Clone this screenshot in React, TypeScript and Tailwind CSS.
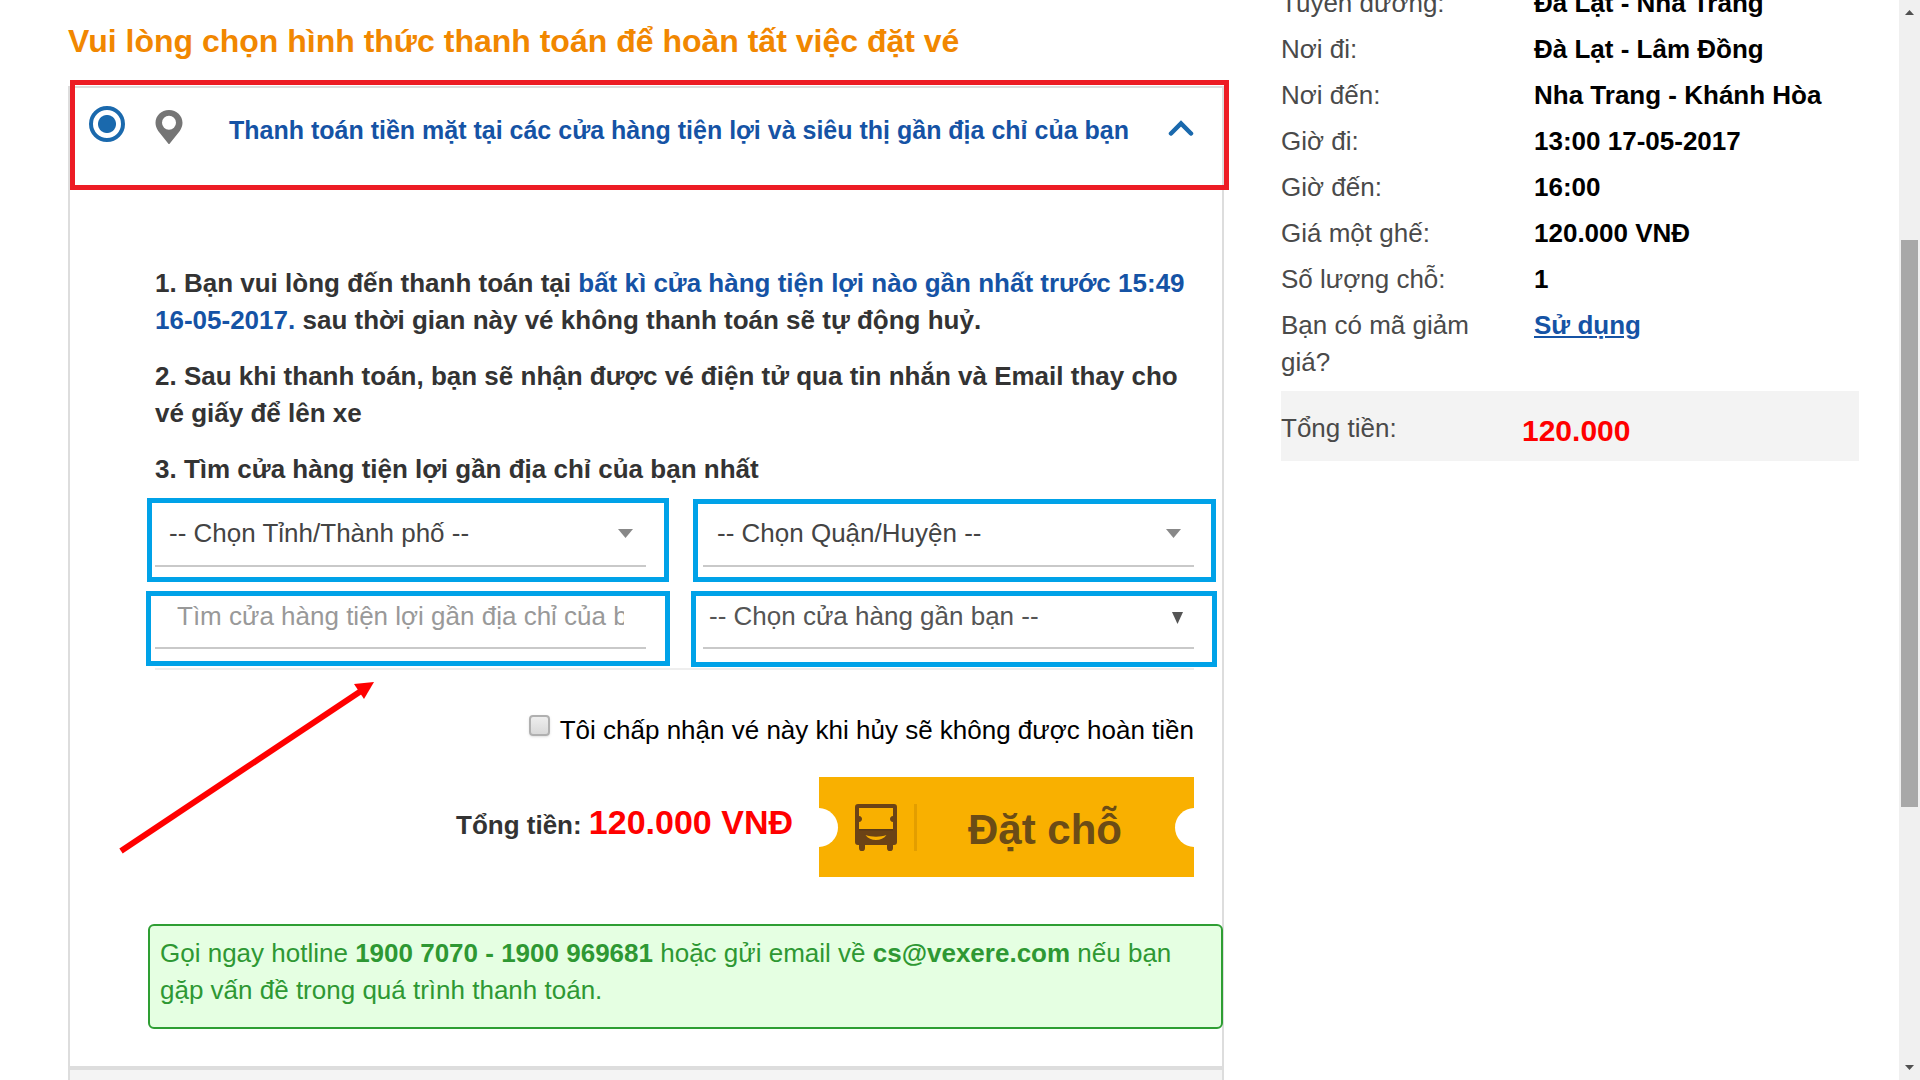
import React from "react";

const trip: [string, string][] = [
  ["Tuyến đường:", "Đà Lạt - Nha Trang"],
  ["Nơi đi:", "Đà Lạt - Lâm Đồng"],
  ["Nơi đến:", "Nha Trang - Khánh Hòa"],
  ["Giờ đi:", "13:00 17-05-2017"],
  ["Giờ đến:", "16:00"],
  ["Giá một ghế:", "120.000 VNĐ"],
  ["Số lượng chỗ:", "1"],
];

function PinIcon() {
  return (
    <svg className="mt-1 ml-[30px] h-[34px] w-7 shrink-0" viewBox="0 0 28 34" aria-hidden="true">
      <path
        fill="#757575"
        fillRule="evenodd"
        d="M14 0C6.300 0 .5 5.700 .5 12.800c0 3 1.100 5.600 2.700 8.200L14 34.500 24.800 21c1.600-2.600 2.700-5.200 2.700-8.200C27.500 5.700 21.700 0 14 0Zm0 5.800a7 7 0 1 1 0 14 7 7 0 0 1 0-14Z"
      />
    </svg>
  );
}

function BusIcon() {
  return (
    <svg className="h-[47px] w-[42px] shrink-0" viewBox="0 0 42 47" aria-hidden="true">
      <path
        fill="#6b4316"
        fillRule="evenodd"
        d="M3 0h36a3 3 0 0 1 3 3v35a3 3 0 0 1-3 3h-1v3.200a2.800 2.800 0 0 1-6 0V41H10v3.200a2.800 2.800 0 0 1-6 0V41H3a3 3 0 0 1-3-3V3a3 3 0 0 1 3-3ZM4 4v8c4 .3 4 5.700 0 6v7h34v-7c-4-.3-4-5.700 0-6V4H4Zm6.500 27c4.500 6.800 16.500 6.800 21 0-6 2.200-15 2.200-21 0Z"
      />
      <path fill="#5a3a17" d="M4 25h34v1.500H4z" />
    </svg>
  );
}

function Caret({ dark = false }: { dark?: boolean }) {
  return dark ? (
    <svg className="pointer-events-none absolute top-[27px] right-[11px] h-3 w-[11px]" viewBox="0 0 11 12" aria-hidden="true">
      <path fill="#555" d="M0 0h11L5.500 12z" />
    </svg>
  ) : (
    <svg className="pointer-events-none absolute top-[30px] right-[13px] h-[9px] w-[15px]" viewBox="0 0 15 9" aria-hidden="true">
      <path fill="#888" d="M0 0h15L7.500 9z" />
    </svg>
  );
}

function CashHeader() {
  return (
    <div className="relative flex h-[102px] items-start pt-[18px] pr-7 pl-[19px]">
      <input
        id="cash"
        type="radio"
        name="method"
        defaultChecked
        className="size-9 shrink-0 appearance-none rounded-full border-4 border-[#1a69ad] bg-[radial-gradient(circle,#1a69ad_8.5px,#fff_9.5px)]"
      />
      <PinIcon />
      <label htmlFor="cash" className="mt-1.5 ml-[46px] flex-1 text-[25px] font-bold text-[#1553a5]">
        Thanh toán tiền mặt tại các cửa hàng tiện lợi và siêu thị gần địa chỉ của bạn
      </label>
      <button type="button" aria-label="Thu gọn" className="mt-3.5">
        <svg className="h-4 w-[26px]" viewBox="0 0 26 16" fill="none" aria-hidden="true">
          <path d="M3 13.500 13 3.500l10 10" stroke="#1a69ad" strokeWidth="4.500" strokeLinecap="round" />
        </svg>
      </button>
      <span className="pointer-events-none absolute -top-2 -right-[7px] bottom-0 left-0 border-5 border-[#ed1c24]" />
    </div>
  );
}

function StoreFinder() {
  const mark = "pointer-events-none absolute border-5 border-[#00a2e8]";
  const line = "relative border-b-2 border-[#c9c9c9]";
  return (
    <div className="mt-[11px] grid grid-cols-2 gap-x-[57px] gap-y-[18px] border-b-2 border-[#eee] pb-[19px] text-[#444]">
      <div className={line}>
        <select aria-label="Tỉnh/Thành phố" className="h-[66px] w-full appearance-none pt-0.5 pl-3.5">
          <option>-- Chọn Tỉnh/Thành phố --</option>
        </select>
        <Caret />
        <span className={`${mark} -top-px -right-[23px] -bottom-[17px] -left-2`} />
      </div>
      <div className={line}>
        <select aria-label="Quận/Huyện" className="h-[66px] w-full appearance-none pt-0.5 pl-3.5">
          <option>-- Chọn Quận/Huyện --</option>
        </select>
        <Caret />
        <span className={`${mark} top-0 -right-[22px] -bottom-[17px] -left-2.5`} />
      </div>
      <div className={line}>
        <input
          type="text"
          aria-label="Tìm cửa hàng"
          placeholder="Tìm cửa hàng tiện lợi gần địa chỉ của bạn"
          className="h-[62px] w-full pr-[22px] pl-[22px] placeholder:text-[#999]"
        />
        <span className={`${mark} top-1.5 -right-6 -bottom-[19px] -left-[9px]`} />
      </div>
      <div className={line}>
        <select aria-label="Cửa hàng gần bạn" className="h-[62px] w-full appearance-none pl-1.5 text-[#555]">
          <option>-- Chọn cửa hàng gần bạn --</option>
        </select>
        <Caret dark />
        <span className={`${mark} top-1.5 -right-[23px] -bottom-5 -left-3`} />
      </div>
    </div>
  );
}

function BookRow() {
  return (
    <div className="relative mt-7 flex items-center justify-end">
      <svg className="pointer-events-none absolute -top-[95px] -left-9 h-[172px] w-[256px]" viewBox="0 0 256 172" aria-hidden="true">
        <path d="M2 169 242 9" stroke="#f00" strokeWidth="6" />
        <path d="M255 0l-20 2 10 15z" fill="#f00" />
      </svg>
      <p className="mr-[26px] pb-1.5 font-bold text-[#333]">
        Tổng tiền: <span className="text-[34px] text-[#f00]">120.000 VNĐ</span>
      </p>
      <button
        type="button"
        className="relative flex h-[100px] w-[375px] items-center overflow-hidden bg-[#f9b000] pl-9 text-[#6b4c16]"
      >
        <span className="absolute top-[31px] -left-5 size-[39px] rounded-full bg-white" />
        <span className="absolute top-[31px] -right-5 size-[39px] rounded-full bg-white" />
        <BusIcon />
        <span className="ml-[17px] h-[47px] w-[3px] bg-[#e39e00]" />
        <span className="ml-[51px] pt-1 text-[42px] font-bold">Đặt chỗ</span>
      </button>
    </div>
  );
}

function Payment() {
  return (
    <section className="pt-[21px]">
      <h1 className="mb-[25px] text-[32px] leading-10 font-bold text-[#f18700]">
        Vui lòng chọn hình thức thanh toán để hoàn tất việc đặt vé
      </h1>
      <div className="border-2 border-b-4 border-[#ddd]">
        <CashHeader />
        <div className="pt-[75px] pr-7 pb-[37px] pl-[85px]">
          <div className="space-y-[19px] font-bold text-[#333]">
            <p>
              1. Bạn vui lòng đến thanh toán tại{" "}
              <span className="text-[#1553a5]">bất kì cửa hàng tiện lợi nào gần nhất trước 15:49 16-05-2017.</span> sau thời
              gian này vé không thanh toán sẽ tự động huỷ.
            </p>
            <p>2. Sau khi thanh toán, bạn sẽ nhận được vé điện tử qua tin nhắn và Email thay cho vé giấy để lên xe</p>
            <p>3. Tìm cửa hàng tiện lợi gần địa chỉ của bạn nhất</p>
          </div>
          <StoreFinder />
          <div className="mt-[42px] flex items-start justify-end text-black">
            <input
              id="accept"
              type="checkbox"
              className="mt-[3px] mr-2.5 size-[21px] appearance-none rounded-sm border-2 border-[#b0b0b0] bg-linear-to-b from-[#eee] to-[#d9d9d9] shadow-sm"
            />
            <label htmlFor="accept">Tôi chấp nhận vé này khi hủy sẽ không được hoàn tiền</label>
          </div>
          <BookRow />
          <p className="mt-[47px] -mr-[29px] -ml-[7px] rounded-md border-2 border-[#2e9e33] bg-[#e5ffe2] px-2.5 pt-[9px] pb-[18px] text-[#2e9833]">
            Gọi ngay hotline <b>1900 7070 - 1900 969681</b> hoặc gửi email về <b>cs@vexere.com</b> nếu bạn gặp vấn đề trong
            quá trình thanh toán.
          </p>
        </div>
      </div>
      <div className="h-24 border-x-2 border-[#ddd] bg-[#f4f4f4]" />
    </section>
  );
}

function Summary() {
  return (
    <aside className="-mt-[15px] text-[#4a4a4a]">
      <dl className="space-y-[9px]">
        {trip.map(([k, v]) => (
          <div key={k} className="flex">
            <dt className="w-[253px] shrink-0">{k}</dt>
            <dd className="font-bold text-black">{v}</dd>
          </div>
        ))}
        <div className="flex">
          <dt className="w-[253px] shrink-0 pr-10">Bạn có mã giảm giá?</dt>
          <dd>
            <a href="#" className="font-bold text-[#1553a5] underline">
              Sử dụng
            </a>
          </dd>
        </div>
      </dl>
      <div className="mt-2.5 flex h-[70px] items-center bg-[#f3f3f3] pt-1">
        <span className="w-[241px]">Tổng tiền:</span>
        <strong className="pt-1 text-[30px] text-[#f00]">120.000</strong>
      </div>
    </aside>
  );
}

function ScrollTrack() {
  return (
    <div className="flex w-[21px] shrink-0 flex-col items-center bg-[#f0f0f0] pt-2.5 pb-2.5" aria-hidden="true">
      <svg className="h-[5px] w-[9px]" viewBox="0 0 9 5">
        <path fill="#505050" d="M0 5h9L4.500 0z" />
      </svg>
      <div className="basis-[225px]" />
      <div className="w-[17px] basis-[567px] bg-[#a8a8a8]" />
      <svg className="mt-auto h-[5px] w-[9px]" viewBox="0 0 9 5">
        <path fill="#505050" d="M0 0h9L4.500 5z" />
      </svg>
    </div>
  );
}

export default function App() {
  return (
    <div className="flex h-screen bg-white font-['Liberation_Sans',Arial,sans-serif] text-[26px] leading-[37px]">
      <main className="grid flex-1 grid-cols-[minmax(0,2fr)_minmax(0,1fr)] gap-x-[57px] overflow-hidden pr-10 pl-[68px]">
        <Payment />
        <Summary />
      </main>
      <ScrollTrack />
    </div>
  );
}
